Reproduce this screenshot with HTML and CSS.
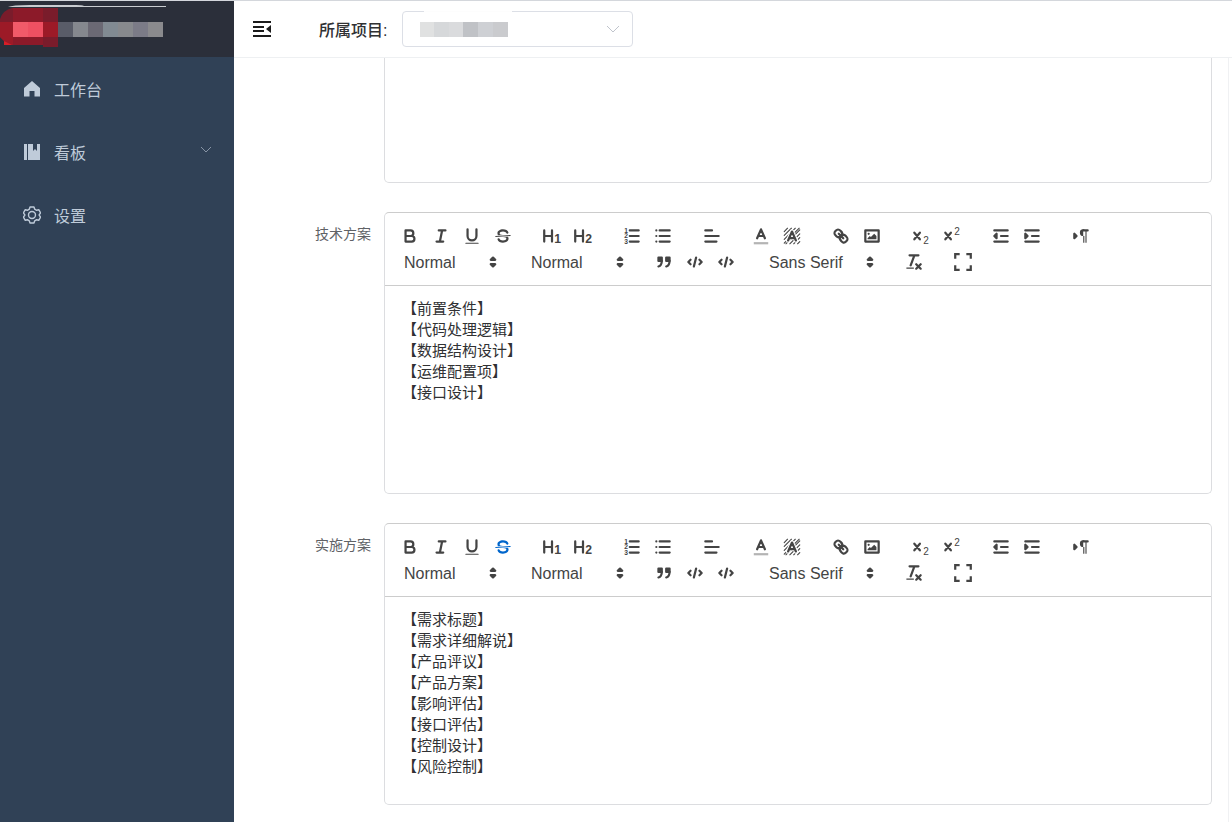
FILE: index.html
```html
<!DOCTYPE html>
<html lang="zh-CN">
<head>
<meta charset="utf-8">
<title>工作台</title>
<link rel="stylesheet" href="styles.css">
</head>
<body>
<svg class="sprite" aria-hidden="true">
  <symbol id="bold" viewBox="0 0 18 18"><path class="s" d="M5,4H9.5A2.5,2.5,0,0,1,9.5,9H5ZM5,9h5.5A2.5,2.5,0,0,1,10.5,14H5Z"/></symbol>
  <symbol id="italic" viewBox="0 0 18 18"><path class="s" d="M7,4H13M5,14H11M8,14L10,4"/></symbol>
  <symbol id="underline" viewBox="0 0 18 18"><path class="s" d="M5,3V9a4,4,0,0,0,8,0V3"/><rect class="f" height="1" rx=".5" width="12" x="3" y="15"/></symbol>
  <symbol id="strike" viewBox="0 0 18 18"><path class="s thin" d="M15.5,8.5L2.5,9.5"/><path class="f" d="M9.007,8C6.542,7.791,6,7.519,6,6.5,6,5.792,7.283,5,9,5c1.571,0,2.765.679,2.969,1.309a1,1,0,0,0,1.9-.617C13.356,4.106,11.354,3,9,3,6.2,3,4,4.538,4,6.5a3.2,3.2,0,0,0,.5,1.843Z"/><path class="f" d="M8.984,10C11.457,10.208,12,10.479,12,11.5c0,.708-1.283,1.5-3,1.5-1.571,0-2.765-.679-2.969-1.309a1,1,0,1,0-1.9.617C4.644,13.894,6.646,15,9,15c2.8,0,5-1.538,5-3.5a3.2,3.2,0,0,0-.5-1.843Z"/></symbol>
  <symbol id="h1" viewBox="0 0 18 18"><path class="s" d="M2,4V14M9,4V14M2,9H9"/><text class="digit" x="11" y="15">1</text></symbol>
  <symbol id="h2" viewBox="0 0 18 18"><path class="s" d="M2,4V14M9,4V14M2,9H9"/><text class="digit" x="11" y="15">2</text></symbol>
  <symbol id="ordered" viewBox="0 0 18 18"><path class="s" d="M7,4H15M7,9H15M7,14H15"/><text class="tiny" x="2" y="6">1</text><text class="tiny" x="2" y="11">2</text><text class="tiny" x="2" y="16">3</text></symbol>
  <symbol id="bullet" viewBox="0 0 18 18"><path class="s" d="M6,4H15M6,9H15M6,14H15M3,4H3M3,9H3M3,14H3"/></symbol>
  <symbol id="align" viewBox="0 0 18 18"><path class="s" d="M3,9H15M3,14H13M3,4H9"/></symbol>
  <symbol id="color" viewBox="0 0 18 18"><path class="s faint" d="M2.5,15.5H15.5"/><path class="s" d="M5.5,11L9,3L12.5,11M6.4,9H11.6"/></symbol>
  <symbol id="background" viewBox="0 0 18 18"><path class="s hatch" d="M2,5L5,2M2,8.500L8.500,2M2,12L12,2M2,15.500L15.500,2M3.500,16L16,3.500M7,16L16,7M10.500,16L16,10.500M14,16L16,14"/><path class="s halo" d="M5.500,13L9,5L12.500,13"/><path class="s" d="M5.500,13L9,5L12.500,13M6.400,11H11.600"/></symbol>
  <symbol id="link" viewBox="0 0 18 18"><path class="s" d="M7,7L11,11"/><path class="s" d="M8.9,4.577a3.476,3.476,0,0,1,.36,4.679A3.476,3.476,0,0,1,4.577,8.9C3.185,7.5,2.035,6.4,4.217,4.217S7.5,3.185,8.9,4.577Z"/><path class="s" d="M13.423,9.1a3.476,3.476,0,0,0-4.679-.36,3.476,3.476,0,0,0,.36,4.679c1.392,1.392,2.5,2.542,4.679.36S14.815,10.5,13.423,9.1Z"/></symbol>
  <symbol id="image" viewBox="0 0 18 18"><rect class="s" height="10" width="12" x="3" y="4"/><circle class="f" cx="6" cy="7" r="1"/><path class="f" d="M5,12V11L7,9L8,10L11,7L13,9V12Z"/></symbol>
  <symbol id="sub" viewBox="0 0 18 18"><path class="s" d="M3,6L8,12M8,6L3,12"/><text class="script" x="11" y="16">2</text></symbol>
  <symbol id="super" viewBox="0 0 18 18"><path class="s" d="M3,6L8,12M8,6L3,12"/><text class="script" x="11" y="8">2</text></symbol>
  <symbol id="outdent" viewBox="0 0 18 18"><path class="s" d="M3,14H15M3,4H15M9,9H15"/><path class="f s" d="M5,7V11L3,9Z"/></symbol>
  <symbol id="indent" viewBox="0 0 18 18"><path class="s" d="M3,14H15M3,4H15M9,9H15"/><path class="f s" d="M3,7V11L5,9Z"/></symbol>
  <symbol id="direction" viewBox="0 0 18 18"><path class="f s" d="M3,11L5,9L3,7Z"/><path class="s" d="M15,4H11"/><path class="f" d="M11,3a3,3,0,0,0,0,6h1V3ZM11,4h1V15h-1ZM13,4h1V15h-1Z"/></symbol>
  <symbol id="quote" viewBox="0 0 18 18"><path class="f s" d="M4,5H7V8H4ZM11,5H14V8H11Z"/><path class="s" d="M7,8c0,4.031-3,5-3,5M14,8c0,4.031-3,5-3,5"/></symbol>
  <symbol id="code" viewBox="0 0 18 18"><path class="s" d="M5,7L3,9L5,11M13,7L15,9L13,11M10,5L8,13"/></symbol>
  <symbol id="clean" viewBox="0 0 18 18"><path class="s" d="M5,3H13M6,12L9.350,3M11,11L15,15M15,11L11,15"/><rect class="f" height="1" rx=".5" width="7" x="2" y="14"/></symbol>
  <symbol id="full" viewBox="0 0 18 18"><path class="corner" d="M2,6V2H6M12,2H16V6M16,12V16H12M6,16H2V12"/></symbol>
  <symbol id="updown" viewBox="0 0 18 18"><path class="f s" d="M7,11L9,13L11,11ZM7,7L9,5L11,7Z"/></symbol>
</svg>

<div class="app">
  <aside class="sidebar">
    <div class="brand">
      <svg class="brand-art" viewBox="0 0 234 56" aria-hidden="true">
        <path fill="#c9ccd0" d="M8,6Q12,4 30,4H76Q82,4 84,5H166V6Z"/>
        <path fill="#7a1c2b" d="M12,7H58V46H43V44H8L0,36V18Q3,9 12,7Z"/>
        <path fill="#9c1a27" d="M0,21H13V36H43V44H8L0,36ZM43,21H58V36H43Z"/>
        <path fill="#8c1a29" d="M13,7H43V21H13ZM13,36H43V44H13Z"/>
        <path fill="#d81e27" d="M4,40L12,44H4Z"/>
        <path fill="#f15a69" d="M13,21H28V36H13Z"/><path fill="#ee5062" d="M28,21H43V36H28Z"/>
        <path fill="#595c68" d="M58,21H73V36H58Z"/><path fill="#85888e" d="M73,21H88V36H73Z"/>
        <path fill="#6b6974" d="M88,21H103V36H88Z"/><path fill="#818a92" d="M103,21H118V36H103Z"/>
        <path fill="#87898d" d="M118,21H133V36H118Z"/><path fill="#7b7b87" d="M133,21H148V36H133Z"/>
        <path fill="#8a8a8d" d="M148,21H163V36H148Z"/>
      </svg>
    </div>
    <nav class="menu">
      <a class="item" href="#"><svg class="nav-icon" viewBox="0 0 18 18" aria-hidden="true"><path fill="currentColor" d="M9,1L17,8V16.500H11.500V11H6.500V16.500H1V8Z"/></svg><span>工作台</span></a>
      <a class="item" href="#"><svg class="nav-icon" viewBox="0 0 18 18" aria-hidden="true"><path fill="currentColor" d="M1,1H4V17H1ZM5,1H10V8L12,6L14,8V1H17V17H5Z"/></svg><span>看板</span><svg class="chevron" viewBox="0 0 12 12" aria-hidden="true"><path d="M1,3L6,8L11,3"/></svg></a>
      <a class="item" href="#"><svg class="nav-icon" viewBox="0 0 18 18" aria-hidden="true"><g fill="none" stroke="currentColor" stroke-width="1.400" stroke-linejoin="round"><path d="M7,1H11L11.700,3.200L13.600,4.300L15.900,3.800L17.600,7L16.200,8.700V9.300L17.600,11L15.900,14.200L13.600,13.700L11.700,14.800L11,17H7L6.300,14.800L4.400,13.700L2.100,14.200L.4,11L1.800,9.300V8.700L.4,7L2.100,3.800L4.400,4.300L6.300,3.200Z"/><circle cx="9" cy="9" r="3.500"/></g></svg><span>设置</span></a>
    </nav>
  </aside>

  <div class="main">
    <header class="topbar">
      <button class="fold" type="button" aria-label="折叠菜单"><svg viewBox="0 0 18 16" aria-hidden="true"><path fill="none" stroke="#1b1b1b" stroke-width="2" d="M0,1H18M0,6H11M0,10H11M0,15H18"/><path fill="#1b1b1b" d="M18,4V12L13,8Z"/></svg></button>
      <label class="project-label" for="project">所属项目:</label>
      <div class="project">
        <select id="project"><option></option></select>
        <svg class="mosaic" viewBox="0 0 88 15" aria-hidden="true"><path fill="#e0e1e1" d="M0,0H14V15H0Z"/><path fill="#d6d8da" d="M14,0H29V15H14Z"/><path fill="#dadbdd" d="M29,0H43V15H29Z"/><path fill="#c0c2c6" d="M43,0H58V15H43Z"/><path fill="#ced0d4" d="M58,0H73V15H58Z"/><path fill="#cacbce" d="M73,0H88V15H73Z"/></svg>
        <svg class="chevron" viewBox="0 0 12 12" aria-hidden="true"><path d="M0,3L6,9L12,3"/></svg>
        <i class="smudge"></i>
      </div>
    </header>

    <main class="form">
      <section class="row">
        <span class="label"></span>
        <div class="editor clipped"><div class="text short" contenteditable="true"></div></div>
      </section>

      <section class="row">
        <span class="label" id="tech">技术方案</span>
        <div class="editor">
          <div class="toolbar">
            <div class="group"><button type="button" aria-label="粗体"><svg><use href="#bold"/></svg></button><button type="button" aria-label="斜体"><svg><use href="#italic"/></svg></button><button type="button" aria-label="下划线"><svg><use href="#underline"/></svg></button><button type="button" aria-label="删除线"><svg><use href="#strike"/></svg></button></div>
            <div class="group"><button type="button" aria-label="标题一"><svg><use href="#h1"/></svg></button><button type="button" aria-label="标题二"><svg><use href="#h2"/></svg></button></div>
            <div class="group"><button type="button" aria-label="有序列表"><svg><use href="#ordered"/></svg></button><button type="button" aria-label="无序列表"><svg><use href="#bullet"/></svg></button></div>
            <div class="group"><button type="button" aria-label="对齐"><svg><use href="#align"/></svg></button></div>
            <div class="group"><button type="button" aria-label="文字颜色"><svg><use href="#color"/></svg></button><button type="button" aria-label="背景颜色"><svg><use href="#background"/></svg></button></div>
            <div class="group"><button type="button" aria-label="链接"><svg><use href="#link"/></svg></button><button type="button" aria-label="图片"><svg><use href="#image"/></svg></button></div>
            <div class="group"><button type="button" aria-label="下标"><svg><use href="#sub"/></svg></button><button type="button" aria-label="上标"><svg><use href="#super"/></svg></button></div>
            <div class="group"><button type="button" aria-label="减少缩进"><svg><use href="#outdent"/></svg></button><button type="button" aria-label="增加缩进"><svg><use href="#indent"/></svg></button></div>
            <div class="group"><button type="button" aria-label="文字方向"><svg><use href="#direction"/></svg></button></div>
            <div class="picker"><select aria-label="字号"><option>Normal</option></select><svg><use href="#updown"/></svg></div>
            <div class="picker"><select aria-label="标题"><option>Normal</option></select><svg><use href="#updown"/></svg></div>
            <div class="group"><button type="button" aria-label="引用"><svg><use href="#quote"/></svg></button><button type="button" aria-label="行内代码"><svg><use href="#code"/></svg></button><button type="button" aria-label="代码块"><svg><use href="#code"/></svg></button></div>
            <div class="picker wide"><select aria-label="字体"><option>Sans Serif</option></select><svg><use href="#updown"/></svg></div>
            <div class="group"><button type="button" aria-label="清除格式"><svg><use href="#clean"/></svg></button></div>
            <div class="group"><button type="button" aria-label="全屏"><svg><use href="#full"/></svg></button></div>
          </div>
          <div class="text" contenteditable="true" role="textbox" aria-labelledby="tech"><p>【前置条件】</p><p>【代码处理逻辑】</p><p>【数据结构设计】</p><p>【运维配置项】</p><p>【接口设计】</p></div>
        </div>
      </section>

      <section class="row">
        <span class="label" id="impl">实施方案</span>
        <div class="editor">
          <div class="toolbar">
            <div class="group"><button type="button" aria-label="粗体"><svg><use href="#bold"/></svg></button><button type="button" aria-label="斜体"><svg><use href="#italic"/></svg></button><button type="button" aria-label="下划线"><svg><use href="#underline"/></svg></button><button class="active" type="button" aria-label="删除线"><svg><use href="#strike"/></svg></button></div>
            <div class="group"><button type="button" aria-label="标题一"><svg><use href="#h1"/></svg></button><button type="button" aria-label="标题二"><svg><use href="#h2"/></svg></button></div>
            <div class="group"><button type="button" aria-label="有序列表"><svg><use href="#ordered"/></svg></button><button type="button" aria-label="无序列表"><svg><use href="#bullet"/></svg></button></div>
            <div class="group"><button type="button" aria-label="对齐"><svg><use href="#align"/></svg></button></div>
            <div class="group"><button type="button" aria-label="文字颜色"><svg><use href="#color"/></svg></button><button type="button" aria-label="背景颜色"><svg><use href="#background"/></svg></button></div>
            <div class="group"><button type="button" aria-label="链接"><svg><use href="#link"/></svg></button><button type="button" aria-label="图片"><svg><use href="#image"/></svg></button></div>
            <div class="group"><button type="button" aria-label="下标"><svg><use href="#sub"/></svg></button><button type="button" aria-label="上标"><svg><use href="#super"/></svg></button></div>
            <div class="group"><button type="button" aria-label="减少缩进"><svg><use href="#outdent"/></svg></button><button type="button" aria-label="增加缩进"><svg><use href="#indent"/></svg></button></div>
            <div class="group"><button type="button" aria-label="文字方向"><svg><use href="#direction"/></svg></button></div>
            <div class="picker"><select aria-label="字号"><option>Normal</option></select><svg><use href="#updown"/></svg></div>
            <div class="picker"><select aria-label="标题"><option>Normal</option></select><svg><use href="#updown"/></svg></div>
            <div class="group"><button type="button" aria-label="引用"><svg><use href="#quote"/></svg></button><button type="button" aria-label="行内代码"><svg><use href="#code"/></svg></button><button type="button" aria-label="代码块"><svg><use href="#code"/></svg></button></div>
            <div class="picker wide"><select aria-label="字体"><option>Sans Serif</option></select><svg><use href="#updown"/></svg></div>
            <div class="group"><button type="button" aria-label="清除格式"><svg><use href="#clean"/></svg></button></div>
            <div class="group"><button type="button" aria-label="全屏"><svg><use href="#full"/></svg></button></div>
          </div>
          <div class="text" contenteditable="true" role="textbox" aria-labelledby="impl"><p>【需求标题】</p><p>【需求详细解说】</p><p>【产品评议】</p><p>【产品方案】</p><p>【影响评估】</p><p>【接口评估】</p><p>【控制设计】</p><p>【风险控制】</p></div>
        </div>
      </section>
    </main>
  </div>
</div>
</body>
</html>
```
FILE: styles.css
```css
* { box-sizing: border-box; }

body {
  margin: 0;
  font-family: "Liberation Sans", "Noto Sans CJK SC", sans-serif;
  color: #303133;
  background: #fff;
}

p { margin: 0; }
button { padding: 0; border: 0; background: none; color: inherit; cursor: pointer; }
select { appearance: none; background: transparent; color: inherit; font: inherit; }

.sprite { display: none; }

.app {
  display: flex;
  height: 100vh;
  overflow: hidden;
  border-top: 1px solid #d4d7dc;
}

/* Sidebar */
.sidebar { flex: 0 0 234px; background: #304156; }
.brand { height: 56px; background: #2b2f3a; }
.brand-art { display: block; width: 100%; height: 100%; }
.item {
  display: flex;
  align-items: center;
  gap: 13px;
  height: 63px;
  padding: 0 22px 0 23px;
  color: #bfcbd9;
  font-size: 16px;
  text-decoration: none;
}
.nav-icon { width: 18px; height: 18px; }
.chevron { width: 12px; height: 12px; fill: none; stroke: #8794a5; }
.item .chevron { margin: 0 0 4px auto; }

/* Top bar */
.main { display: flex; flex: 1; flex-direction: column; min-width: 0; }
.topbar {
  display: flex;
  flex: none;
  align-items: center;
  height: 57px;
  padding-left: 19px;
  border-bottom: 1px solid #eef0f2;
}
.fold { display: block; width: 18px; height: 16px; }
.fold svg { display: block; width: 18px; height: 16px; }
.project-label { margin: 0 15px 0 48px; font-size: 16px; font-weight: 500; }
.project {
  position: relative;
  display: grid;
  grid-template-columns: 1fr;
  align-items: center;
  width: 231px;
  height: 36px;
}
.project > * { grid-area: 1 / 1; }
.project select { width: 100%; height: 36px; border: 1px solid #dcdfe6; border-radius: 4px; }
.mosaic { width: 88px; height: 15px; margin-left: 18px; pointer-events: none; }
.project .chevron { justify-self: end; margin-right: 14px; stroke: #c0c4cc; pointer-events: none; }
.smudge { position: absolute; top: 0; left: 22px; width: 88px; height: 1px; background: #fdfdfd; }

/* Form */
.form {
  flex: 1;
  min-height: 0;
  margin-right: 3px;
  padding-right: 16px;
  overflow: hidden;
  border-right: 1px solid #f0f1f3;
}
.row { display: grid; grid-template-columns: 137px minmax(0, 1fr); column-gap: 13px; margin-bottom: 29px; }
.label { padding-top: 12px; color: #606266; font-size: 14px; line-height: 20px; text-align: right; }

.editor { border: 1px solid #dcdde0; border-top-color: #ccc; border-radius: 5px; }
.clipped { border-top: 0; border-top-left-radius: 0; border-top-right-radius: 0; }
.toolbar {
  display: flex;
  flex-wrap: wrap;
  column-gap: 18px;
  padding: 10px 9px;
  border-bottom: 1px solid #ccc;
  color: #444;
}
.group { display: flex; }
.group button { display: grid; place-items: center; width: 31px; height: 26px; }
.group svg, .picker svg { width: 20px; height: 20px; }
.group .active { color: #06c; }

.picker { display: grid; align-items: center; width: 109px; height: 26px; font-size: 16px; }
.picker.wide { width: 121px; }
.picker > * { grid-area: 1 / 1; }
.picker select { width: 100%; height: 26px; padding: 0 10px; border: 0; }
.picker svg { justify-self: end; pointer-events: none; }

.text { min-height: 207px; padding: 12px 17px; font-size: 15px; line-height: 21px; outline: 0; }
.text.short { min-height: 124px; }

/* Icon strokes */
.s { fill: none; stroke: currentColor; stroke-width: 2; stroke-linecap: round; stroke-linejoin: round; }
.f { fill: currentColor; }
.thin { stroke-width: 1; }
.faint { stroke-width: 2; opacity: .4; stroke-linecap: butt; }
.hatch { stroke-width: 1; }
.halo { stroke: #fff; stroke-width: 4; }
.corner { fill: none; stroke: currentColor; stroke-width: 2; }
.digit { fill: currentColor; font-size: 11px; font-weight: 700; }
.tiny { fill: currentColor; font-size: 6px; font-weight: 700; }
.script { fill: currentColor; font-size: 9px; }
```
